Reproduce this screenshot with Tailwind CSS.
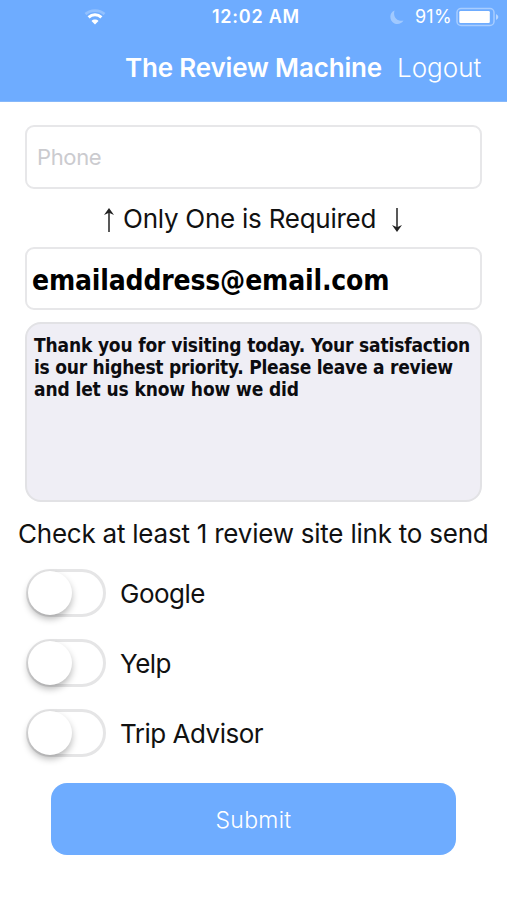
<!DOCTYPE html>
<html lang="en">
<head>
<meta charset="utf-8">
<meta name="viewport" content="width=device-width, initial-scale=1">
<title>The Review Machine</title>
<script src="https://cdn.jsdelivr.net/npm/@tailwindcss/browser@4"></script>
</head>
<body class="w-[507px] h-[900px] overflow-hidden bg-white text-[#111] font-['Inter','Liberation_Sans',sans-serif]">
<header class="h-[102px] bg-[#6eacff] border-b border-[#86b8fa] text-white">
  <div class="h-[34px] flex items-center">
    <svg class="ml-[84px] w-[22px] h-[16px]" viewBox="0 0 22 16" fill="none" stroke="white">
      <path d="M1.5 5.1C6.7.4 15.3.4 20.5 5.1" stroke-width="2.8" opacity=".25"/>
      <path d="M4.6 8.3C8.2 5 13.8 5 17.4 8.3" stroke-width="3"/>
      <path d="M7.5 11.9C9.4 10.1 12.6 10.1 14.5 11.9L11 15.4Z" fill="white" stroke="none"/>
    </svg>
    <span class="ml-[106px] w-[88px] whitespace-nowrap text-[18px] font-semibold leading-[34px] tracking-[0.75px]">12:02 AM</span>
    <svg class="ml-[90px] w-[14px] h-[15px]" viewBox="0 0 14 15"><path d="M4.6.5C-1.2 2.4-.9 11.2 4.5 13.4C8 15 11.7 13.6 13.5 10.6C7.5 12 2.4 6.6 4.6.5Z" fill="white" opacity=".35"/></svg>
    <span class="ml-[11px] w-[37px] whitespace-nowrap text-[18px] leading-[34px] tracking-[0.2px]">91%</span>
    <svg class="ml-[4px] w-[43px] h-[20px]" viewBox="0 0 43 20"><rect x="1" y="1.5" width="37" height="17" rx="4" fill="none" stroke="white" stroke-width="1.5" opacity=".4"/><rect x="3.3" y="4" width="30.5" height="12" rx="1.2" fill="white"/><path d="M40 7Q42.4 8.3 42.4 10T40 13Z" fill="white" opacity=".5"/></svg>
  </div>
  <div class="h-[67px] flex items-center">
    <h1 class="ml-[125px] w-[272px] whitespace-nowrap text-[26px] font-semibold tracking-[-0.17px]">The Review Machine</h1>
    <button class="whitespace-nowrap text-[26px] font-light">Logout</button>
  </div>
</header>
<main class="flex flex-col">
  <div class="mt-[23px] mx-[25px] h-[64px] rounded-[9px] border-2 border-[#e7e7e9] px-[10px] flex items-center text-[22px] text-[#cbcbcf] tracking-[-0.35px]">Phone</div>
  <div class="h-[58px] flex items-center whitespace-nowrap text-[26px]">
    <svg class="ml-[102px] w-[14px] h-[26px] mt-[4px]" viewBox="0 0 14 26" fill="none" stroke="#222" stroke-width="1.5"><path d="M7 25V3"/><path d="M7 1L2 8L7 5.7L12 8Z" fill="#222" stroke="none"/></svg>
    <span class="ml-[7px] w-[267px] tracking-[-0.25px]">Only One is Required</span>
    <svg class="w-[14px] h-[26px] mt-[4px]" viewBox="0 0 14 26" fill="none" stroke="#222" stroke-width="1.5"><path d="M7 1V23"/><path d="M7 25L2 18L7 20.3L12 18Z" fill="#222" stroke="none"/></svg>
  </div>
  <div class="mx-[25px] h-[63px] rounded-[9px] border-2 border-[#e7e7e9] pl-[5px] pt-[5px] flex items-center whitespace-nowrap text-[28px] tracking-[-0.17px] font-bold text-black font-['DejaVu_Sans_Condensed','DejaVu_Sans',sans-serif]">emailaddress@email.com</div>
  <div class="mt-[12px] mx-[25px] h-[180px] rounded-[16px] border-2 border-[#e2e2e5] bg-[#efeef5] pl-[7px] pt-[10px] whitespace-nowrap text-[19px] leading-[22px] font-bold text-[#0c0c10] font-['DejaVu_Sans_Condensed','DejaVu_Sans',sans-serif]">
    <p class="tracking-[-0.16px]">Thank you for visiting today. Your satisfaction</p>
    <p class="tracking-[-0.24px]">is our highest priority. Please leave a review</p>
    <p class="tracking-[-0.12px]">and let us know how we did</p>
  </div>
  <p class="ml-[18px] h-[56px] pt-[7px] flex items-center whitespace-nowrap text-[26px] tracking-[-0.23px]">Check at least 1 review site link to send</p>
  <div class="h-[70px] pl-[26px] flex items-center gap-[14px] text-[26px] tracking-[-0.5px]">
    <span class="w-[80px] h-[48px] rounded-full border-[3px] border-[#e5e5e6] flex items-center"><i class="ml-[-1px] mt-[-1px] size-[44px] shrink-0 rounded-full bg-white shadow-[0_4px_7px_rgba(0,0,0,0.28)]"></i></span><span>Google</span>
  </div>
  <div class="h-[70px] pl-[26px] flex items-center gap-[14px] text-[26px] tracking-[-0.5px]">
    <span class="w-[80px] h-[48px] rounded-full border-[3px] border-[#e5e5e6] flex items-center"><i class="ml-[-1px] mt-[-1px] size-[44px] shrink-0 rounded-full bg-white shadow-[0_4px_7px_rgba(0,0,0,0.28)]"></i></span><span>Yelp</span>
  </div>
  <div class="h-[70px] pl-[26px] flex items-center gap-[14px] text-[26px] tracking-[-0.5px]">
    <span class="w-[80px] h-[48px] rounded-full border-[3px] border-[#e5e5e6] flex items-center"><i class="ml-[-1px] mt-[-1px] size-[44px] shrink-0 rounded-full bg-white shadow-[0_4px_7px_rgba(0,0,0,0.28)]"></i></span><span>Trip Advisor</span>
  </div>
  <button class="mt-[15px] ml-[51px] w-[405px] h-[72px] pt-[2px] rounded-[16px] bg-[#6eacff] text-white text-[23px] font-light tracking-[0.3px]">Submit</button>
</main>
</body>
</html>
